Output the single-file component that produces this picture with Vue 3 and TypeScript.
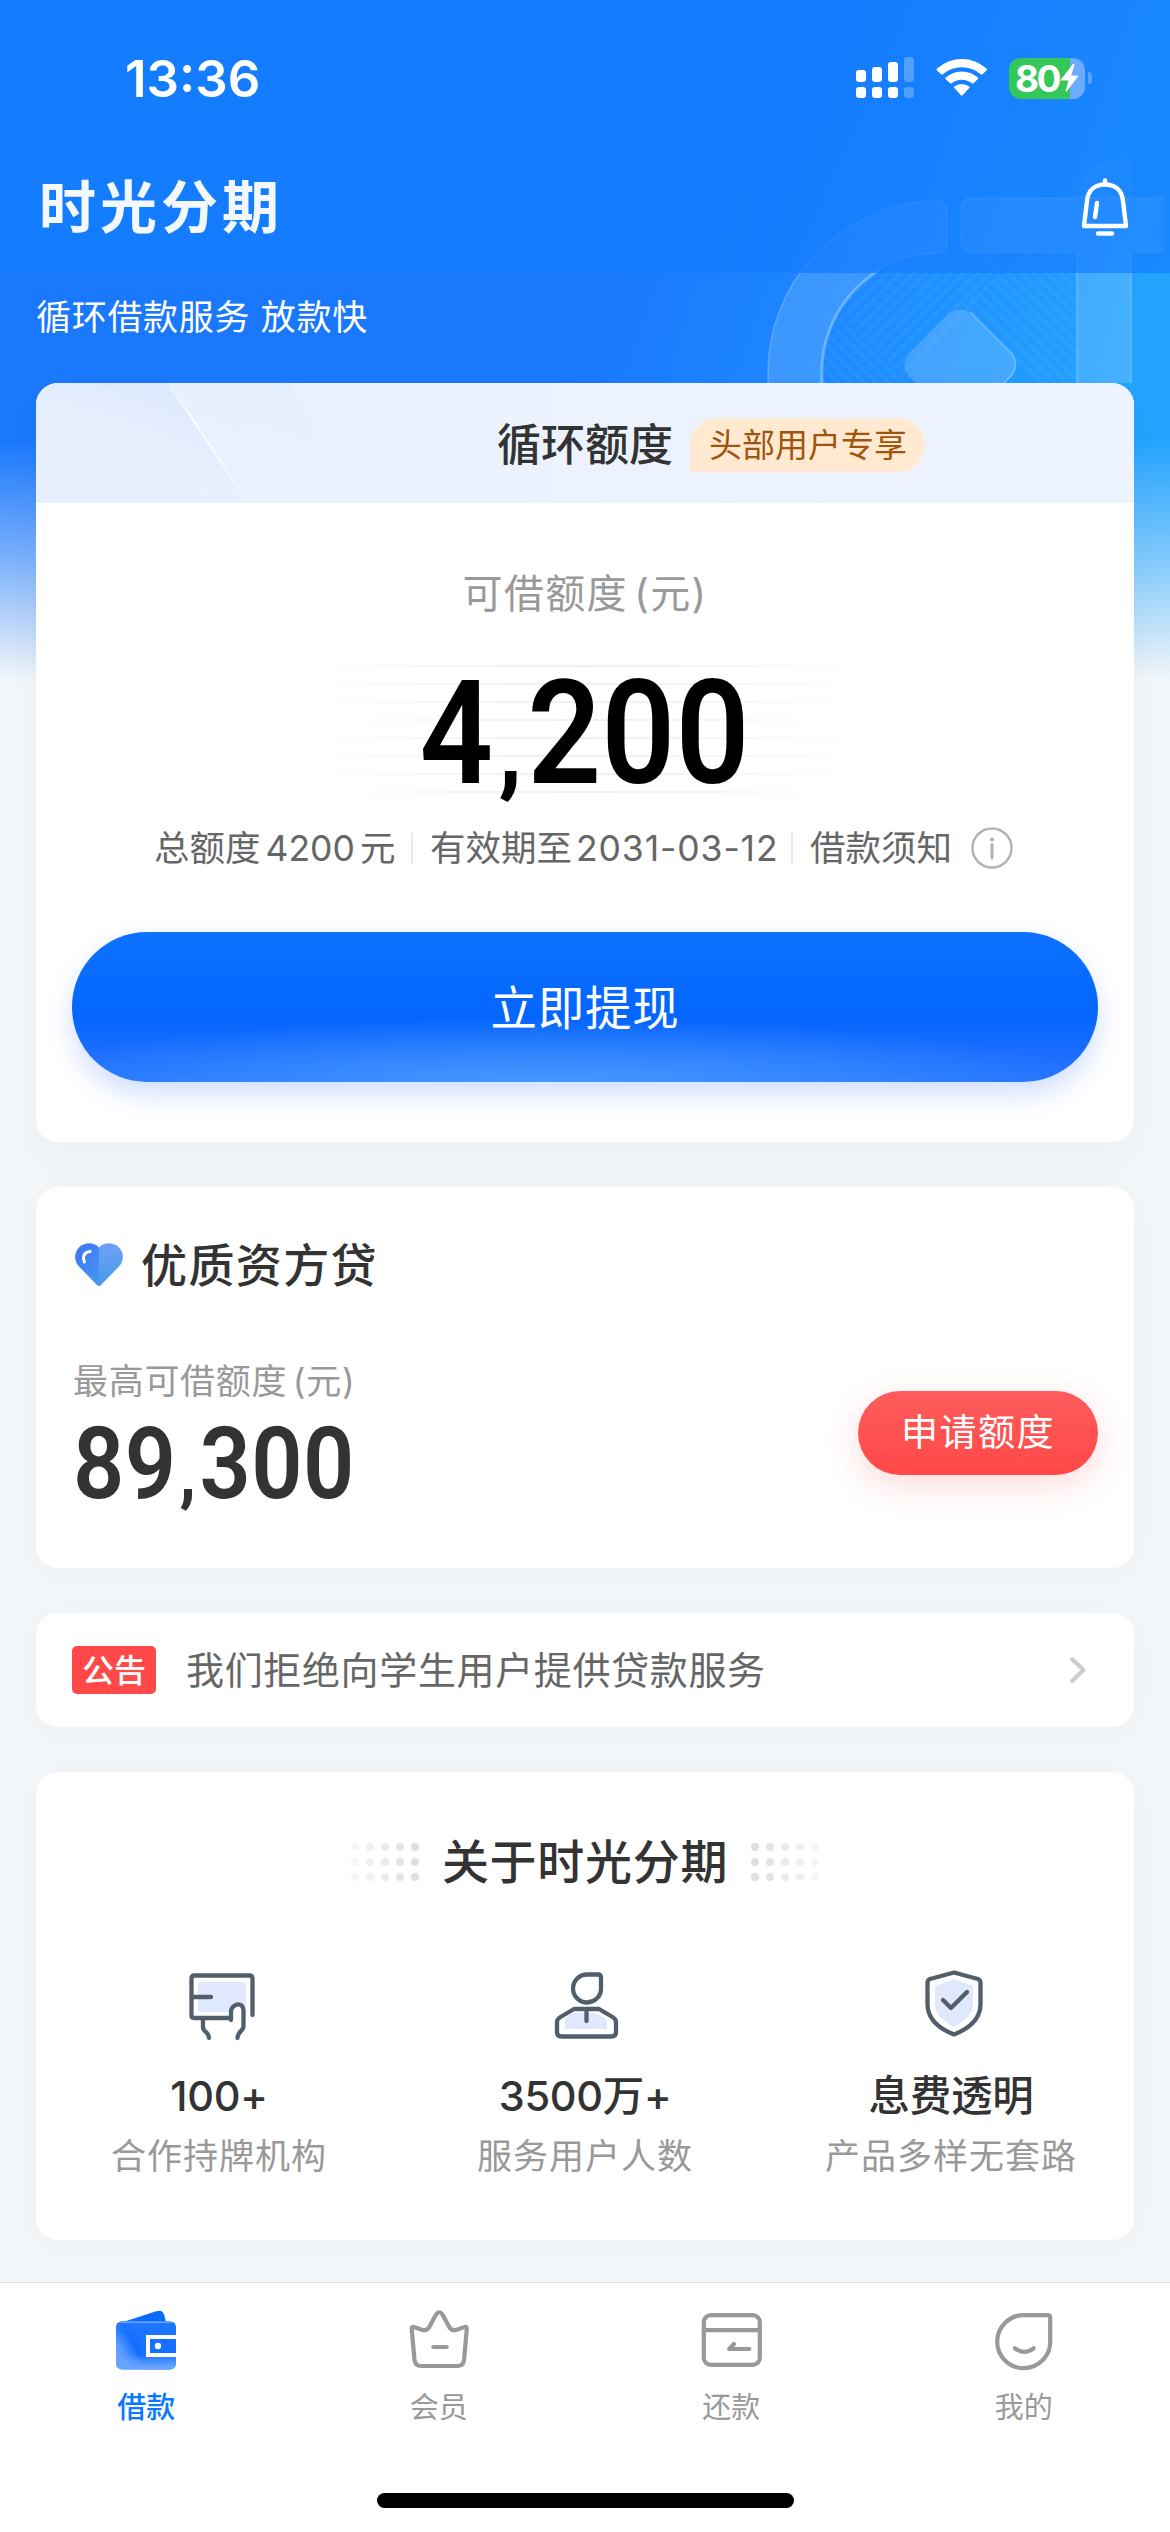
<script setup lang="ts">
interface Stat {
  icon: 'partner' | 'user' | 'shield'
  value: string
  label: string
}

interface Tab {
  icon: 'wallet' | 'crown' | 'repay' | 'face'
  label: string
}

const stats: Stat[] = [
  { icon: 'partner', value: '100+', label: '合作持牌机构' },
  { icon: 'user', value: '3500万+', label: '服务用户人数' },
  { icon: 'shield', value: '息费透明', label: '产品多样无套路' },
]

const tabs: Tab[] = [
  { icon: 'wallet', label: '借款' },
  { icon: 'crown', label: '会员' },
  { icon: 'repay', label: '还款' },
  { icon: 'face', label: '我的' },
]

const signalTops = [13, 10, 5, 0]
const dotColumns = [0, 1, 2, 3, 4]
const dotRows = [0, 1, 2]
const dotOpacity = [0.03, 0.055, 0.075, 0.1, 0.12]
</script>

<template>
  <div class="page">
    <div class="hero-bg">
      <svg class="deco" width="1170" height="383" viewBox="0 0 1170 383">
        <defs>
          <pattern id="stripeA" width="9" height="9" patternUnits="userSpaceOnUse" patternTransform="rotate(-45)">
            <rect width="9" height="3.500" fill="#fff" opacity=".045" />
          </pattern>
          <pattern id="stripeB" width="9" height="9" patternUnits="userSpaceOnUse" patternTransform="rotate(45)">
            <rect width="9" height="3.500" fill="#fff" opacity=".045" />
          </pattern>
          <clipPath id="inner">
            <path d="M821 383V372A119 119 0 0 1 940 253H1077V383Z" />
          </clipPath>
        </defs>
        <g clip-path="url(#inner)">
          <path d="M821 300L904 383H821Z" fill="url(#stripeB)" />
          <path d="M840 317L870 345L908 380L998 275V253H840Z" fill="url(#stripeA)" />
          <path d="M998 275L960 306L1040 383H1077V253H1020Z" fill="url(#stripeB)" />
        </g>
        <path d="M768 384V372A172 172 0 0 1 930 201H935Q947 201 947 213V241Q947 253 935 253A119 119 0 0 0 821 372V384Z" fill="#fff" fill-opacity=".14" stroke="#fff" stroke-opacity=".22" stroke-width="1.5" />
        <path d="M822 384V372A119 119 0 0 1 880 270" fill="none" stroke="#8cc8ff" stroke-opacity=".6" stroke-width="2.5" />
        <path d="M1164 198H973Q961 198 961 210V240Q961 252 973 252H1077V384H1131V252H1164Z" fill="#fff" fill-opacity=".15" />
        <path d="M1164 198H973Q961 198 961 210V240Q961 252 973 252H1077V384M1131 384V252H1164" fill="none" stroke="#fff" stroke-opacity=".24" stroke-width="1.5" />
        <path d="M1077 198Q1080 165 1125 154Q1131 153 1131 159V198Z" fill="#fff" fill-opacity=".07" />
        <rect x="916" y="321" width="88" height="88" rx="16" transform="rotate(45 960 365)" fill="#fff" fill-opacity=".16" />
        <path d="M970 312L1011 353Q1020 364 1011 376L1003 384" fill="none" stroke="#fff" stroke-opacity=".3" stroke-width="1.5" />
      </svg>
      <div class="veil"></div>
    </div>

    <header class="hero">
      <div class="status">
        <span class="clock">13:36</span>
        <div class="status-icons">
          <svg width="58" height="42" viewBox="0 0 58 42">
            <g v-for="(top, i) in signalTops" :key="i" fill="#fff" :opacity="i === 3 ? 0.25 : 1">
              <rect :x="i * 16" :y="top" width="10" :height="25 - top" rx="3" />
              <rect :x="i * 16" y="30" width="10" height="11" rx="3" />
            </g>
          </svg>
          <svg class="wifi" width="52" height="42" viewBox="0 0 52 42">
            <path d="M1 13.5Q0 12.500 1 11.500A37 37 0 0 1 50.500 11.500Q51.500 12.500 50.500 13.500L46.500 17.300Q45.700 18 44.800 17.300A29 29 0 0 0 6.800 17.300Q5.900 18 5.100 17.300Z" fill="#fff" />
            <path d="M9.500 22Q9 21.300 9.800 20.600A24 24 0 0 1 41.800 20.600Q42.500 21.300 41.900 22L37.500 26.300Q36.800 27 36 26.300A16 16 0 0 0 15.600 26.300Q14.800 27 14.100 26.300Z" fill="#fff" />
            <path d="M18.200 30.800Q17.600 30.200 18.300 29.600A12.500 12.500 0 0 1 33.300 29.600Q34 30.200 33.400 30.800L26.700 38.300Q25.800 39.200 24.900 38.300Z" fill="#fff" />
          </svg>
          <div class="battery">
            <div class="battery-body">
              <span>80</span>
              <svg width="19" height="28" viewBox="0 0 19 28"><path d="M13 0L1 15.500Q.5 16.500 1.500 16.500H8.500L5.500 27Q6 28 7 27L18 12.500Q18.500 11.500 17.500 11.500H11L14.500 1Q14 -.5 13 0Z" fill="#fff" /></svg>
            </div>
            <i class="battery-nub"></i>
          </div>
        </div>
      </div>
      <div class="brand-row">
        <h1 class="brand">时光分期</h1>
        <svg class="bell" width="48" height="60" viewBox="0 0 48 60" fill="none" stroke="#fff" stroke-width="4.400" stroke-linecap="round" stroke-linejoin="round">
          <path d="M24 2.500V6" />
          <path d="M3 48H45L42 23C41 12 34 6.500 24 6.500S7 12 6 23Z" />
          <path d="M16 25L14 39" />
          <path d="M17 55.500H31" />
        </svg>
      </div>
      <p class="slogan">循环借款服务 放款快</p>
    </header>

    <main class="content">
      <section class="card loan">
        <div class="loan-head">
          <h2>循环额度</h2>
          <span class="vip">头部用户专享</span>
          <svg class="shine" width="340" height="120" viewBox="0 0 340 120">
            <defs>
              <linearGradient id="shineFill" x1="1" y1="0" x2="0.300" y2="1">
                <stop offset="0" stop-color="#cfe0fd" />
                <stop offset=".7" stop-color="#e6effe" stop-opacity=".3" />
                <stop offset="1" stop-color="#e6effe" stop-opacity="0" />
              </linearGradient>
              <linearGradient id="shineLine" x1="0" y1="0" x2="0" y2="1">
                <stop offset="0" stop-color="#fff" stop-opacity=".1" />
                <stop offset=".35" stop-color="#fff" />
                <stop offset="1" stop-color="#fff" stop-opacity=".2" />
              </linearGradient>
            </defs>
            <path d="M0 0H132L210 120H0Z" fill="url(#shineFill)" opacity=".8" />
            <path d="M132 0H252L330 120H210Z" fill="url(#shineFill)" opacity=".25" />
            <path d="M132 0L210 116" stroke="url(#shineLine)" stroke-width="1.800" />
          </svg>
        </div>
        <p class="loan-label">可借额度 (元)</p>
        <div class="amount">
          <span class="din">4<i>,</i>200</span>
        </div>
        <div class="facts">
          <span class="fact-a">总额度<b>4200</b>元</span>
          <span class="fact-b">有效期至<b>2031-03-12</b></span>
          <span class="fact-c">借款须知</span>
          <svg width="42" height="42" viewBox="0 0 42 42" fill="none" stroke="#b3b3b3">
            <circle cx="21" cy="21" r="19.500" stroke-width="2.500" />
            <path d="M21 17.500V31" stroke-width="3" stroke-linecap="round" />
            <circle cx="21" cy="12.500" r="2" fill="#b3b3b3" stroke="none" />
          </svg>
        </div>
        <button class="withdraw">立即提现</button>
      </section>

      <section class="card partner">
        <div class="partner-title">
          <svg width="48" height="44" viewBox="0 0 48 44">
            <defs>
              <linearGradient id="heartL" x1="0" y1="0" x2="1" y2="1">
                <stop offset="0" stop-color="#3a76f6" />
                <stop offset="1" stop-color="#4a96f0" />
              </linearGradient>
              <linearGradient id="heartR" x1="0" y1="0" x2="0" y2="1">
                <stop offset="0" stop-color="#6fa0f6" />
                <stop offset="1" stop-color="#479be8" />
              </linearGradient>
            </defs>
            <path d="M24 4.500C19 -1 10 -1 4.500 4C-1 9.500 -1.500 17.500 4 23.500L21.500 41.500Q24 43.500 24 43.200Z" fill="url(#heartL)" />
            <path d="M24 4.500C29 -1 38 -1 43.500 4C49 9.500 49.500 17.500 44 23.500L26.500 41.500Q25 43 24 43Z" fill="url(#heartR)" />
            <path d="M15 8.500Q8.500 9.500 8.500 15Q8.500 17 9.500 19" fill="none" stroke="#fff" stroke-width="3" stroke-linecap="round" />
          </svg>
          <h2>优质资方贷</h2>
        </div>
        <div class="partner-row">
          <div>
            <p class="partner-label">最高可借额度 (元)</p>
            <span class="din">89<i>,</i>300</span>
          </div>
          <button class="apply">申请额度</button>
        </div>
      </section>

      <section class="card notice">
        <span class="notice-tag">公告</span>
        <span class="notice-text">我们拒绝向学生用户提供贷款服务</span>
        <svg width="18" height="28" viewBox="0 0 18 28"><path d="M3 3L14.500 14L3 25" fill="none" stroke="#ccc" stroke-width="4" stroke-linecap="round" stroke-linejoin="round" /></svg>
      </section>

      <section class="card about">
        <div class="about-title">
          <svg width="70" height="40" viewBox="0 0 70 40">
            <g v-for="c in dotColumns" :key="c" :opacity="dotOpacity[c]">
              <circle v-for="r in dotRows" :key="r" :cx="5 + c * 15" :cy="5 + r * 15" r="4" />
            </g>
          </svg>
          <h2>关于时光分期</h2>
          <svg width="70" height="40" viewBox="0 0 70 40">
            <g v-for="c in dotColumns" :key="c" :opacity="dotOpacity[4 - c]">
              <circle v-for="r in dotRows" :key="r" :cx="5 + c * 15" :cy="5 + r * 15" r="4" />
            </g>
          </svg>
        </div>
        <div class="stats">
          <div v-for="s in stats" :key="s.label" class="stat">
            <svg width="72" height="72" viewBox="0 0 72 72" fill="none" stroke="#525f6b" stroke-width="4.300" stroke-linecap="round" stroke-linejoin="round">
              <template v-if="s.icon === 'partner'">
                <rect x="15" y="12" width="48" height="30" rx="3" fill="#e0e8fd" stroke="none" />
                <path d="M47 48H11Q8.500 48 8.500 45.500V8.500Q8.500 5.500 11.500 5.500H66.500Q69.500 5.500 69.500 8.500V45" />
                <path d="M9 27H28" />
                <path d="M20 49V57Q20 60 23 62Q26 65 26 68" />
                <path d="M48 50V41Q49 36 54 34.500Q59.500 33.500 60.500 40V56Q60.500 59 57 62Q54.500 65 54.500 68" fill="#fff" />
              </template>
              <template v-else-if="s.icon === 'user'">
                <path d="M16 59V50Q16 46 25 43H45Q58 47 58 52V59Z" fill="#e0e8fd" stroke="none" />
                <path d="M38 4.500H49Q52 4.500 52 8V19.500A14 14 0 1 1 38 4.500Z" />
                <path d="M25 39H50L63.500 47Q67 49 67 52V62Q67 66.500 62.500 66.500H12.500Q8 66.500 8 62V52Q8 49 11.500 47Z" />
                <path d="M37.500 40V51" />
              </template>
              <template v-else>
                <path d="M39 9L58 16V36Q57 47 39 57Q21 47 20 36V16Z" fill="#e0e8fd" stroke="none" />
                <path d="M39 2.500L63 9Q65.500 10 65.500 13V34Q65.500 54 39 64.500Q12.500 54 12.500 34V13Q12.500 10 15 9Z" />
                <path d="M28 30L36 38L52 22" />
              </template>
            </svg>
            <strong>{{ s.value }}</strong>
            <span>{{ s.label }}</span>
          </div>
        </div>
      </section>
    </main>

    <nav class="tabbar">
      <div class="tabs">
        <div v-for="(t, i) in tabs" :key="t.label" class="tab" :class="{ active: i === 0 }">
          <svg width="66" height="66" viewBox="0 0 66 66" fill="none" stroke="#999" stroke-width="4.200" stroke-linecap="round" stroke-linejoin="round">
            <template v-if="t.icon === 'wallet'">
              <defs>
                <linearGradient id="walletFill" x1="0" y1="0.650" x2="0.450" y2="0.450">
                  <stop offset="0" stop-color="#68a4ff" />
                  <stop offset=".25" stop-color="#5597ff" />
                  <stop offset=".7" stop-color="#0f6eff" />
                  <stop offset="1" stop-color="#1a72ff" />
                </linearGradient>
                <linearGradient id="walletFoot" x1="0" y1="0" x2="0" y2="1">
                  <stop offset=".68" stop-color="#68a4ff" stop-opacity="0" />
                  <stop offset=".95" stop-color="#68a4ff" />
                </linearGradient>
                <linearGradient id="walletTop" x1="0" y1="0" x2="0" y2="1">
                  <stop offset="0" stop-color="#1f76ff" />
                  <stop offset=".4" stop-color="#1f76ff" stop-opacity="0" />
                </linearGradient>
              </defs>
              <path d="M10 15L44 4Q49.500 2.500 51.200 8L53 15Z" fill="#0a6cff" stroke="none" />
              <g stroke="none">
                <rect x="3" y="14.500" width="60" height="48" rx="6" fill="url(#walletFill)" />
                <rect x="3" y="14.500" width="60" height="48" rx="6" fill="url(#walletTop)" />
                <rect x="3" y="14.500" width="60" height="48" rx="6" fill="url(#walletFoot)" />
              </g>
              <path d="M8 15.200H58" stroke="#6aa5ff" stroke-width="1.400" />
              <rect x="35" y="30" width="28" height="18" fill="#1471ff" stroke="none" />
              <path d="M63 30H35V48H63" stroke="#fff" stroke-width="4" stroke-linecap="butt" stroke-linejoin="miter" />
              <circle cx="45" cy="39" r="3.200" fill="#fff" stroke="none" />
            </template>
            <template v-else-if="t.icon === 'crown'">
              <path d="M8 20L16.500 23Q20.500 24 23 20.500L29.500 8.500Q33.250 2 37 8.500L43.500 20.500Q46 24 50 23L58.500 20Q61 19 60.800 22L58 53Q57.300 59 51.500 59H15Q9.200 59 8.500 53L5.700 22Q5.500 19 8 20Z" />
              <path d="M27.300 40H40.700" />
            </template>
            <template v-else-if="t.icon === 'repay'">
              <rect x="5.800" y="8.200" width="56" height="49.700" rx="7" />
              <path d="M6 23.200H61.500" />
              <path d="M51.300 42H31.200L36 37" />
            </template>
            <template v-else>
              <path d="M32.700 8.200H56.500Q59.200 8.200 59.200 11V34.500A26.500 26.500 0 1 1 32.700 8.200Z" />
              <path d="M24 41.300Q33.300 48.500 42.600 41.300" />
            </template>
          </svg>
          <span>{{ t.label }}</span>
        </div>
      </div>
      <div class="home-bar"></div>
    </nav>
  </div>
</template>

<style>
body {
  margin: 0;
  background: #f4f7f9;
}
</style>

<style scoped>
.page {
  position: relative;
  display: flex;
  flex-direction: column;
  width: 1170px;
  height: 2532px;
  overflow: hidden;
  background: #f4f7f9;
  font-family: Inter, "Noto Sans CJK SC", sans-serif;
  color: #333;
}
h1,
h2,
p {
  margin: 0;
  font-weight: 400;
}
i,
b {
  font-style: normal;
  font-weight: inherit;
}
svg {
  display: block;
  flex: none;
}
button {
  border: 0;
  padding: 0;
  color: #fff;
  font-family: inherit;
}
.hero-bg {
  position: absolute;
  inset: 0 0 auto;
  height: 700px;
  background:
    linear-gradient(180deg, rgba(244, 247, 249, 0) 440px, rgba(244, 247, 249, 0.45) 560px, #f4f7f9 682px),
    linear-gradient(108deg, #1a78fd 0, #1a78fd 50%, #1d8aff 68%, #24a4ff 90%);
}
.deco {
  position: absolute;
  inset: 0 auto auto 0;
}
.veil {
  position: absolute;
  inset: 0 0 auto;
  height: 273px;
  background: linear-gradient(115deg, rgba(20, 124, 255, 1) 50%, rgba(20, 124, 255, 0.68) 85%);
}
.hero {
  position: relative;
  height: 383px;
  color: #fff;
}
.status {
  display: flex;
  justify-content: space-between;
  align-items: center;
  height: 156px;
  padding: 0 78px 0 125px;
}
.clock {
  font-size: 51px;
  font-weight: 600;
}
.status-icons {
  display: flex;
  align-items: center;
}
.wifi {
  margin: 0 21px 0 22px;
}
.battery {
  display: flex;
  align-items: center;
  gap: 3px;
}
.battery-body {
  display: flex;
  align-items: center;
  width: 70px;
  height: 41px;
  padding-left: 6px;
  border-radius: 12px;
  background: linear-gradient(90deg, #34c759 80%, #6cabff 80%);
}
.battery-body span {
  width: 45px;
  font-size: 37px;
  font-weight: 700;
  letter-spacing: -2.500px;
}
.battery-nub {
  width: 4px;
  height: 12px;
  border-radius: 0 6px 6px 0;
  background: #5ba3ff;
}
.brand-row {
  display: flex;
  justify-content: space-between;
  height: 60px;
  margin-top: 22px;
  padding: 0 41px 0 39px;
}
.brand {
  font-size: 57px;
  font-weight: 700;
  line-height: 60px;
  letter-spacing: 4px;
  color: #f3f8ff;
}
.slogan {
  margin-top: 54px;
  padding-left: 36px;
  font-size: 35px;
  line-height: 50px;
  letter-spacing: 0.700px;
}
.content {
  position: relative;
  display: flex;
  flex-direction: column;
  gap: 45px;
  padding: 0 36px;
}
.card {
  box-sizing: border-box;
  border-radius: 22px;
  background: #fff;
  box-shadow: 0 4px 40px rgba(40, 60, 60, 0.035);
}
.loan {
  height: 759px;
  overflow: hidden;
  box-shadow: 0 20px 40px rgba(40, 60, 60, 0.035);
}
.loan-head {
  position: relative;
  display: grid;
  grid-template-columns: 1fr auto 1fr;
  align-items: center;
  box-sizing: border-box;
  height: 120px;
  padding-top: 4px;
  background: linear-gradient(90deg, #e7effd, #ebf2fe 30%, #edf3ff);
}
.loan-head h2 {
  grid-column: 2;
  font-size: 44px;
  font-weight: 500;
  line-height: 60px;
}
.shine {
  position: absolute;
  inset: 0 auto auto 0;
}
.vip {
  justify-self: start;
  margin-left: 17px;
  padding: 0 18px 0 19px;
  border-radius: 27px 27px 27px 3px;
  background: #ffe9d1;
  color: #a1540b;
  font-size: 33px;
  line-height: 54px;
}
.loan-label {
  margin-top: 61px;
  text-align: center;
  font-size: 40px;
  line-height: 60px;
  letter-spacing: 1.300px;
  word-spacing: -6px;
  color: #999;
}
.amount {
  display: flex;
  justify-content: center;
  align-items: center;
  box-sizing: border-box;
  width: 570px;
  height: 144px;
  margin: 33px auto 0;
  padding-top: 7px;
  background:
    linear-gradient(90deg, #fff, rgba(255, 255, 255, 0) 50%, #fff),
    repeating-linear-gradient(180deg, #fff 0, #fff 8px, #eeeff8 8px, #eeeff8 10px, #fff 10px, #fff 18px);
}
.din {
  display: block;
  font-family: Roboto, sans-serif;
  font-weight: 600;
  font-variant-numeric: tabular-nums;
}
.din i {
  display: inline-block;
  font-size: 0.680em;
  font-weight: 900;
  line-height: 1;
  text-align: center;
}
.amount .din {
  color: #000;
  font-size: 145px;
  line-height: 144px;
  letter-spacing: 0.500px;
  transform: scaleX(0.89);
}
.amount .din i {
  width: 38px;
}
.facts {
  display: flex;
  align-items: center;
  height: 50px;
  margin: 22px 0 0 118px;
  font-size: 35.500px;
  line-height: 50px;
  color: #666;
  white-space: nowrap;
}
.fact-a b {
  margin: 0 5px;
}
.fact-b b {
  margin-left: 4px;
  letter-spacing: 0.900px;
}
.facts span {
  box-sizing: border-box;
  padding-top: 2px;
}
.fact-a,
.fact-b {
  position: relative;
}
.fact-a {
  width: 276px;
}
.fact-b {
  width: 380px;
}
.fact-c {
  width: 161px;
}
.fact-a::after,
.fact-b::after {
  position: absolute;
  top: 11px;
  right: 17px;
  width: 2px;
  height: 31px;
  background: #e8e8e8;
  content: '';
}
.withdraw {
  display: block;
  box-sizing: border-box;
  width: 1026px;
  height: 150px;
  margin: 59px auto 0;
  padding-bottom: 6px;
  border-radius: 75px;
  background:
    radial-gradient(ellipse 560px 62px at 46% 100%, rgba(75, 160, 255, 0.85), rgba(75, 160, 255, 0)),
    linear-gradient(180deg, #0d72ff 0, #0466ff 56%, #1a6dff 80%, #2474ff 100%);
  box-shadow: 0 12px 26px rgba(20, 90, 255, 0.2);
  font-size: 46.500px;
  font-weight: 400;
  letter-spacing: 0.800px;
}
.partner {
  height: 381px;
  padding: 48px 36px 0 37px;
}
.partner-title {
  display: flex;
  align-items: center;
  gap: 18px;
  height: 60px;
  padding-left: 2px;
}
.partner-title h2 {
  font-size: 46px;
  font-weight: 500;
  line-height: 60px;
  letter-spacing: 1.400px;
}
.partner-row {
  display: flex;
  justify-content: space-between;
  margin-top: 62px;
}
.partner-label {
  font-size: 35px;
  line-height: 48px;
  letter-spacing: 0.700px;
  word-spacing: -5px;
  color: #999;
}
.partner-row .din {
  margin-top: 8px;
  font-size: 101px;
  line-height: 102px;
  letter-spacing: 0.400px;
  transform: scaleX(0.89);
  transform-origin: 0 50%;
}
.partner-row .din i {
  width: 26px;
}
.apply {
  width: 240px;
  height: 84px;
  margin-top: 34px;
  border-radius: 42px;
  background: linear-gradient(180deg, #ff5c5c, #ff4848);
  box-shadow: 0 10px 34px rgba(255, 72, 72, 0.2);
  font-size: 37px;
  line-height: 84px;
  letter-spacing: 1.500px;
}
.notice {
  display: flex;
  align-items: center;
  height: 114px;
  padding: 0 47px 0 36px;
}
.notice-tag {
  width: 84px;
  height: 48px;
  border-radius: 5px;
  background: #ff4848;
  color: #fff;
  font-size: 32px;
  font-weight: 500;
  line-height: 50px;
  text-align: center;
}
.notice-text {
  flex: 1;
  margin-left: 30px;
  font-size: 38px;
  line-height: 50px;
  letter-spacing: 0.650px;
  color: #666;
}
.about {
  height: 468px;
  padding-top: 60px;
}
.about-title {
  display: flex;
  justify-content: center;
  align-items: center;
  gap: 22px;
  height: 60px;
}
.about-title h2 {
  font-size: 47px;
  font-weight: 500;
  line-height: 60px;
  letter-spacing: 0.700px;
}
.stats {
  display: grid;
  grid-template-columns: repeat(3, 1fr);
  margin-top: 78px;
}
.stat {
  display: flex;
  flex-direction: column;
  align-items: center;
}
.stat strong {
  margin-top: 26px;
  font-size: 41.500px;
  font-weight: 500;
  line-height: 56px;
  letter-spacing: -0.300px;
}
.stat span {
  margin-top: 9px;
  font-size: 35px;
  line-height: 46px;
  letter-spacing: 1px;
  color: #999;
}
.tabbar {
  position: relative;
  display: flex;
  flex-direction: column;
  align-items: center;
  justify-content: space-between;
  box-sizing: border-box;
  height: 250px;
  margin-top: auto;
  padding: 24px 0;
  border-top: 1px solid #dedede;
  background: #fff;
}
.tabs {
  display: grid;
  grid-template-columns: repeat(4, 1fr);
  width: 100%;
}
.tab {
  display: flex;
  flex-direction: column;
  align-items: center;
  gap: 15px;
  color: #999;
  font-size: 29px;
  line-height: 40px;
}
.tab.active {
  color: #0a78ff;
  font-weight: 500;
}
.home-bar {
  width: 417px;
  height: 15px;
  border-radius: 8px;
  background: #000;
}
</style>
